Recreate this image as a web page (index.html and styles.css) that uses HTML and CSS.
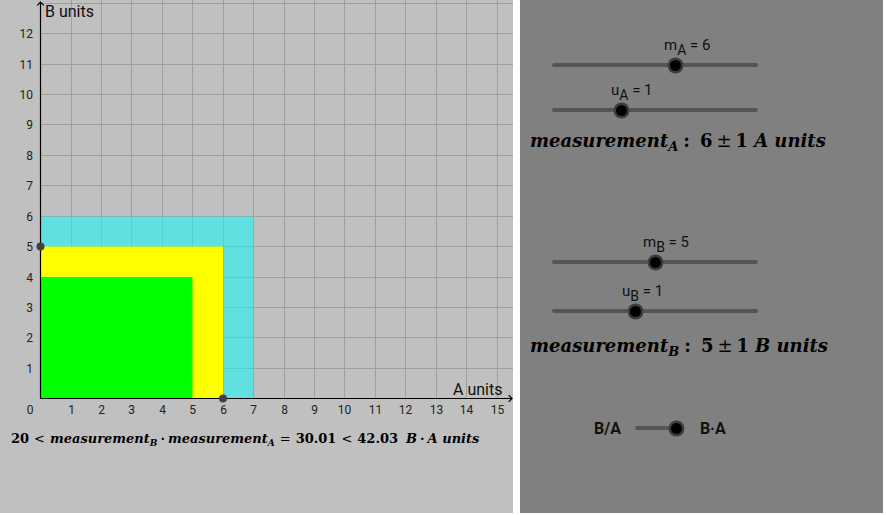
FILE: index.html
```html
<!DOCTYPE html>
<html>
<head>
<meta charset="utf-8">
<link rel="stylesheet" href="styles.css">
</head>
<body>
<div class="app">
  <div class="graph-panel">
    <svg class="graph" width="513" height="420" viewBox="0 0 513 420">
      <g class="grid">
        <line x1="71.5" y1="0" x2="71.5" y2="398"/>
        <line x1="101.5" y1="0" x2="101.5" y2="398"/>
        <line x1="131.5" y1="0" x2="131.5" y2="398"/>
        <line x1="162.5" y1="0" x2="162.5" y2="398"/>
        <line x1="192.5" y1="0" x2="192.5" y2="398"/>
        <line x1="223.5" y1="0" x2="223.5" y2="398"/>
        <line x1="253.5" y1="0" x2="253.5" y2="398"/>
        <line x1="284.5" y1="0" x2="284.5" y2="398"/>
        <line x1="314.5" y1="0" x2="314.5" y2="398"/>
        <line x1="344.5" y1="0" x2="344.5" y2="398"/>
        <line x1="375.5" y1="0" x2="375.5" y2="398"/>
        <line x1="405.5" y1="0" x2="405.5" y2="398"/>
        <line x1="436.5" y1="0" x2="436.5" y2="398"/>
        <line x1="466.5" y1="0" x2="466.5" y2="398"/>
        <line x1="497.5" y1="0" x2="497.5" y2="398"/>
        <line x1="40" y1="368.5" x2="513" y2="368.5"/>
        <line x1="40" y1="337.5" x2="513" y2="337.5"/>
        <line x1="40" y1="307.5" x2="513" y2="307.5"/>
        <line x1="40" y1="277.5" x2="513" y2="277.5"/>
        <line x1="40" y1="246.5" x2="513" y2="246.5"/>
        <line x1="40" y1="216.5" x2="513" y2="216.5"/>
        <line x1="40" y1="185.5" x2="513" y2="185.5"/>
        <line x1="40" y1="155.5" x2="513" y2="155.5"/>
        <line x1="40" y1="124.5" x2="513" y2="124.5"/>
        <line x1="40" y1="94.5" x2="513" y2="94.5"/>
        <line x1="40" y1="64.5" x2="513" y2="64.5"/>
        <line x1="40" y1="33.5" x2="513" y2="33.5"/>
        <line x1="40" y1="3.5" x2="513" y2="3.5"/>
      </g>
      <rect class="r-cyan" x="40.5" y="216.5" width="213" height="182"/>
      <rect class="r-yellow" x="40.5" y="246.5" width="182.5" height="152"/>
      <rect class="r-green" x="40.5" y="277" width="152" height="121.5"/>
      <g class="axis">
        <line x1="40.5" y1="398.5" x2="40.5" y2="2"/>
        <polyline points="37.2,5.3 40.5,2 43.8,5.3"/>
        <line x1="40.5" y1="398.5" x2="512" y2="398.5"/>
        <polyline points="508.7,395.2 512,398.5 508.7,401.8"/>
      </g>
      <circle class="pt" cx="40.5" cy="246.5" r="4"/>
      <circle class="pt" cx="223" cy="398.5" r="4"/>
      <g class="ylab">
        <text x="33" y="372.5">1</text>
        <text x="33" y="341.5">2</text>
        <text x="33" y="311.5">3</text>
        <text x="33" y="281.5">4</text>
        <text x="33" y="250.5">5</text>
        <text x="33" y="220.5">6</text>
        <text x="33" y="189.5">7</text>
        <text x="33" y="159.5">8</text>
        <text x="33" y="128.5">9</text>
        <text x="33" y="98.5">10</text>
        <text x="33" y="68.5">11</text>
        <text x="33" y="37.5">12</text>
      </g>
      <g class="xlab">
        <text x="30" y="413.5">0</text>
        <text x="71.5" y="413.5">1</text>
        <text x="101.5" y="413.5">2</text>
        <text x="131.5" y="413.5">3</text>
        <text x="162.5" y="413.5">4</text>
        <text x="192.5" y="413.5">5</text>
        <text x="223.5" y="413.5">6</text>
        <text x="253.5" y="413.5">7</text>
        <text x="284.5" y="413.5">8</text>
        <text x="314.5" y="413.5">9</text>
        <text x="344.5" y="413.5">10</text>
        <text x="375.5" y="413.5">11</text>
        <text x="405.5" y="413.5">12</text>
        <text x="436.5" y="413.5">13</text>
        <text x="466.5" y="413.5">14</text>
        <text x="497.5" y="413.5">15</text>
      </g>
      <text class="axis-name" x="45" y="17">B units</text>
      <text class="axis-name" x="453" y="394.5">A units</text>
    </svg>
    <div class="formula formula-bottom">
      <span class="mn">20</span><span class="mo">&lt;</span><span class="mi">measurement</span><sub class="msub">B</sub><span class="mo dot">·</span><span class="mi">measurement</span><sub class="msub">A</sub><span class="mo">=</span><span class="mn">30.01</span><span class="mo">&lt;</span><span class="mn">42.03</span><span class="gap"></span><span class="mi">B</span><span class="mo dot">·</span><span class="mi">A units</span>
    </div>
  </div>
  <div class="sep"></div>
  <div class="control-panel">
    <div class="slider slider-ma">
      <div class="slider-label" style="padding-left:112px">m<sub>A</sub> = 6</div>
      <div class="slider-bar"><div class="track"></div><div class="knob" style="left:123px"></div></div>
    </div>
    <div class="slider slider-ua">
      <div class="slider-label" style="padding-left:59px">u<sub>A</sub> = 1</div>
      <div class="slider-bar"><div class="track"></div><div class="knob" style="left:69px"></div></div>
    </div>
    <div class="formula formula-a">
      <span class="mi">measurement</span><sub class="msub">A</sub><span class="colon">:</span><span class="mn">6</span><span class="mo">±</span><span class="mn">1</span><span class="mi sp">A units</span>
    </div>
    <div class="slider slider-mb">
      <div class="slider-label" style="padding-left:91px">m<sub>B</sub> = 5</div>
      <div class="slider-bar"><div class="track"></div><div class="knob" style="left:103px"></div></div>
    </div>
    <div class="slider slider-ub">
      <div class="slider-label" style="padding-left:70px">u<sub>B</sub> = 1</div>
      <div class="slider-bar"><div class="track"></div><div class="knob" style="left:83px"></div></div>
    </div>
    <div class="formula formula-b">
      <span class="mi">measurement</span><sub class="msub">B</sub><span class="colon">:</span><span class="mn">5</span><span class="mo">±</span><span class="mn">1</span><span class="mi sp">B units</span>
    </div>
    <div class="toggle">
      <span class="toggle-text">B/A</span>
      <div class="toggle-bar"><div class="track"></div><div class="knob toggle-knob"></div></div>
      <span class="toggle-text">B·A</span>
    </div>
  </div>
</div>
</body>
</html>
```

FILE: styles.css
```css
html, body {
  margin: 0;
  padding: 0;
  background: #ffffff;
}
body {
  width: 886px;
  height: 515px;
  overflow: hidden;
  font-family: Roboto, "Liberation Sans", sans-serif;
}
.app {
  display: flex;
  height: 513px;
}
.graph-panel {
  width: 513px;
  height: 513px;
  background: #c0c0c0;
  flex: none;
}
.graph {
  display: block;
}
.grid line {
  stroke: #a0a0a0;
  stroke-width: 1;
}
.r-cyan {
  fill: #00ffff;
  fill-opacity: 0.5;
}
.r-yellow { fill: #ffff00; }
.r-green { fill: #00ff00; }
.axis line, .axis polyline {
  stroke: #000;
  stroke-width: 1.2;
  fill: none;
}
.pt {
  fill: #404040;
}
.ylab text {
  font-family: Roboto, sans-serif;
  font-size: 12px;
  fill: #222;
  text-anchor: end;
}
.xlab text {
  font-family: Roboto, sans-serif;
  font-size: 12px;
  fill: #222;
  text-anchor: middle;
}
.axis-name {
  font-family: Roboto, sans-serif;
  font-size: 16px;
  fill: #111;
}
.sep {
  width: 7px;
  flex: none;
}
.control-panel {
  width: 363px;
  height: 513px;
  background: #808080;
  flex: none;
  display: flex;
  flex-direction: column;
}
.slider {
  margin-left: 32px;
  width: 206px;
}
.slider-label {
  height: 18px;
  line-height: 18px;
  font-size: 15px;
  color: #111;
  white-space: nowrap;
}
.slider-label sub {
  font-size: 14px;
  vertical-align: -5px;
  line-height: 0;
}
.slider-bar {
  position: relative;
  height: 10px;
  margin-top: 6px;
}
.track {
  position: absolute;
  left: 0;
  right: 0;
  top: 3px;
  height: 4px;
  border-radius: 2px;
  background: #555555;
}
.knob {
  position: absolute;
  top: 5px;
  width: 11px;
  height: 11px;
  margin-left: -5.5px;
  margin-top: -5.5px;
  border-radius: 50%;
  background: #000;
  box-shadow: 0 0 0 2.5px #3c3c3c;
}
.slider-ma { margin-top: 36px; }
.slider-ua { margin-top: 11px; }
.slider-mb { margin-top: 82px; }
.slider-ub { margin-top: 15px; }
.formula {
  font-family: "DejaVu Serif", serif;
  font-weight: bold;
  color: #000;
  white-space: nowrap;
}
.formula .mi {
  font-style: italic;
}
.formula .msub {
  font-style: italic;
  line-height: 0;
}
.formula-a, .formula-b {
  font-size: 18px;
  line-height: 20px;
  height: 20px;
  padding-left: 10px;
}
.formula-a { margin-top: 16px; }
.formula-b { margin-top: 20px; }
.formula-a .msub, .formula-b .msub {
  font-size: 13px;
  vertical-align: -4px;
}
.colon { margin: 0 10px 0 5px; }
.formula-a .mo, .formula-b .mo {
  margin: 0 4px;
  font-weight: normal;
}
.sp { margin-left: 6px; }
.formula-bottom {
  font-size: 13px;
  line-height: 16px;
  padding-left: 11px;
  margin-top: 11px;
}
.formula-bottom .msub {
  font-size: 9px;
  vertical-align: -3px;
}
.formula-bottom .mo {
  margin: 0 5px;
  font-weight: normal;
}
.formula-bottom .dot {
  font-weight: bold;
  margin: 0 3px;
}
.gap {
  display: inline-block;
  width: 8px;
}
.toggle {
  display: flex;
  align-items: center;
  margin-top: 62px;
  margin-left: 74px;
  height: 20px;
}
.toggle-text {
  font-family: Roboto, sans-serif;
  font-weight: bold;
  font-size: 16px;
  color: #111;
}
.toggle-bar {
  position: relative;
  width: 38px;
  height: 10px;
  margin: 0 27px 0 14px;
}
.toggle-knob {
  left: 42px;
}
```
